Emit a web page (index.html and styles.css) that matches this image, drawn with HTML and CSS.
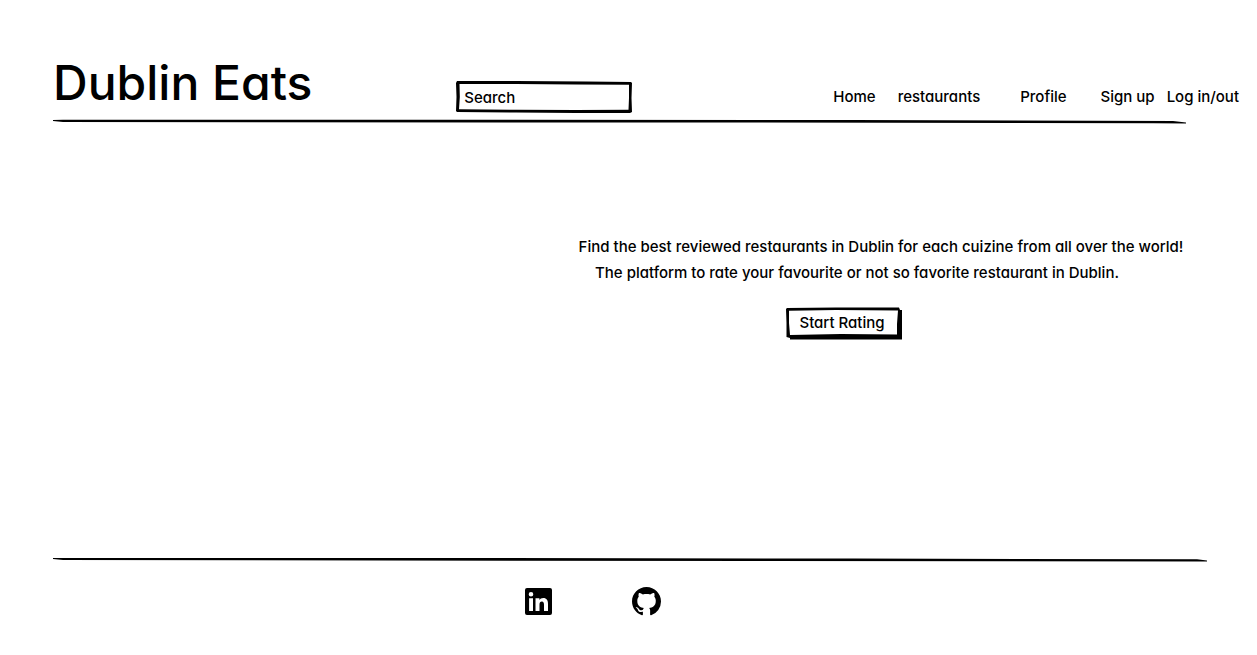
FILE: index.html
```html
<!DOCTYPE html>
<html lang="en">
<head>
<meta charset="utf-8">
<title>Dublin Eats</title>
<link rel="stylesheet" href="styles.css">
</head>
<body>
<header class="header">
  <div class="bar">
    <h1 class="brand">Dublin Eats</h1>
    <form class="search" role="search">
      <svg class="sketch" viewBox="0 0 176 32" preserveAspectRatio="none" aria-hidden="true"><path fill-rule="evenodd" d="M1 0 60 0 130 .6 175 1 176 2 175.500 17 176 31 174 32 120 32 60 31.500 1 31 0 30 .5 16 0 2ZM3.500 3 3.800 16 3 28.300 60 28.700 120 29 172.500 28.700 173 17 173 3.800 120 3.600 60 3Z"/></svg>
      <input class="field" type="search" aria-label="Search" placeholder="Search">
    </form>
    <nav class="nav" aria-label="Main">
      <a class="link" href="#home">Home</a>
      <a class="link restaurants" href="#restaurants">restaurants</a>
      <a class="link profile" href="#profile">Profile</a>
      <a class="link signup" href="#signup">Sign up</a>
      <a class="link" href="#login">Log in/out</a>
    </nav>
  </div>
  <svg class="rule rule-top" viewBox="0 0 1133 6" preserveAspectRatio="none" aria-hidden="true"><path d="M0 1 10 .8 400 .8 800 1 1120 2 1133 3.600 1133 4.600 1100 4.300 700 3.600 10 3 0 2Z"/></svg>
</header>
<main class="main">
  <div class="hero">
    <p class="lead">Find the best reviewed restaurants in Dublin for each cuizine from all over the world!</p>
    <p class="lead second">The platform to rate your favourite or not so favorite restaurant in Dublin.</p>
    <button class="start" type="button">
      <svg class="sketch" viewBox="0 0 116 33" preserveAspectRatio="none" aria-hidden="true"><path fill-rule="evenodd" d="M1 1 50 .4 113 .6 114 3 116 3 116 32.500 4 32.500 4 31 .5 30 .5 16 0 2ZM3 3.700 3 16 4 28 55 27 111 27.500 111 17 112 3.600 50 3Z"/></svg>
      <span class="label">Start Rating</span>
    </button>
  </div>
</main>
<footer class="footer">
  <svg class="rule" viewBox="0 0 1154 6" preserveAspectRatio="none" aria-hidden="true"><path d="M0 1 400 1 800 1.600 1144 2.300 1154 3.500 1154 4.500 700 4 10 3 0 2Z"/></svg>
  <div class="social">
    <a class="icon" href="#linkedin" aria-label="LinkedIn"><svg viewBox="0 0 27 27" width="27" height="27" aria-hidden="true"><path fill-rule="evenodd" d="M2 0H25Q27 0 27 2V25Q27 27 25 27H2Q0 27 0 25V2Q0 0 2 0ZM4.100 10.200V23H8V10.200ZM6 4A2.300 2.300 0 1 0 6 8.600 2.300 2.300 0 1 0 6 4ZM10.500 10.200V23H14.500V16.600C14.500 14.700 15.200 13.500 16.900 13.500 18.500 13.500 19 14.800 19 16.700V23H23V16C23 12.200 21.700 9.900 18.300 9.900 16.400 9.900 15.100 10.800 14.400 12V10.200Z"/></svg></a>
    <a class="icon" href="#github" aria-label="GitHub"><svg viewBox="0 0 16 16" width="29" height="29" aria-hidden="true"><path d="M8 0C3.580 0 0 3.580 0 8c0 3.540 2.290 6.530 5.470 7.590.4.070.55-.17.55-.38 0-.19-.01-.82-.01-1.490-2.010.37-2.530-.49-2.690-.94-.09-.23-.48-.94-.82-1.130-.28-.15-.68-.52-.01-.53.63-.01 1.080.58 1.230.82.72 1.210 1.870.87 2.330.66.07-.52.28-.87.51-1.070-1.780-.2-3.640-.89-3.640-3.950 0-.87.31-1.590.82-2.150-.08-.2-.36-1.020.08-2.120 0 0 .67-.21 2.200.82.64-.18 1.320-.27 2-.27s1.360.09 2 .27c1.530-1.040 2.200-.82 2.200-.82.44 1.100.16 1.920.08 2.120.51.56.82 1.270.82 2.150 0 3.070-1.870 3.750-3.650 3.950.29.25.54.73.54 1.480 0 1.070-.01 1.930-.01 2.200 0 .21.15.46.55.38A8.010 8.010 0 0 0 16 8c0-4.420-3.580-8-8-8Z"/></svg></a>
  </div>
</footer>
</body>
</html>
```
FILE: styles.css
```css
* { box-sizing: border-box; }
body {
  margin: 0;
  min-height: 100vh;
  display: flex;
  flex-direction: column;
  background: #fff;
  color: #000;
  font-family: Inter, "Liberation Sans", sans-serif;
  font-feature-settings: "cv11";
  font-size: 15px;
  font-weight: 500;
  line-height: 26px;
}
.header { padding: 53px 18px 0 53px; }
.bar { display: flex; align-items: flex-end; }
.brand { flex: 0 0 34%; margin: 0; font-size: 48px; line-height: 60px; font-weight: 500; white-space: nowrap; }
.search { position: relative; width: 176px; height: 32px; }
.sketch { position: absolute; inset: 0; width: 100%; height: 100%; pointer-events: none; }
.field {
  width: 100%;
  height: 100%;
  padding: 0 8px;
  border: 0;
  background: none;
  font: inherit;
  font-feature-settings: inherit;
  color: inherit;
  appearance: none;
}
.field::placeholder { color: #000; opacity: 1; }
.nav { display: flex; margin-left: auto; line-height: 32px; white-space: nowrap; }
.link { color: inherit; text-decoration: none; }
.restaurants { margin: 0 40px 0 22px; }
.profile { margin-right: 34px; }
.signup { margin-right: 12px; }
.rule { display: block; width: 100%; height: 6px; }
.rule-top { margin-top: 6px; width: calc(100% - 53px); }
.main { flex: 1; display: flex; justify-content: flex-end; padding: 109px 69px 0 53px; }
.hero { display: flex; flex-direction: column; align-items: center; width: 614px; }
.lead { margin: 0; white-space: nowrap; }
.second { padding-right: 48px; }
.start {
  position: relative;
  width: 116px;
  height: 33px;
  margin: 21px 74px 0 0;
  padding: 0 4px 1px 0;
  border: 0;
  background: none;
  font: inherit;
  font-feature-settings: inherit;
  color: inherit;
  white-space: nowrap;
}
.label { position: relative; }
.footer { padding: 0 50px 39px 53px; }
.social { display: flex; align-items: center; justify-content: center; gap: 80px; margin: 24px 0 0; padding-right: 74px; }
.icon { display: flex; color: inherit; }
```
